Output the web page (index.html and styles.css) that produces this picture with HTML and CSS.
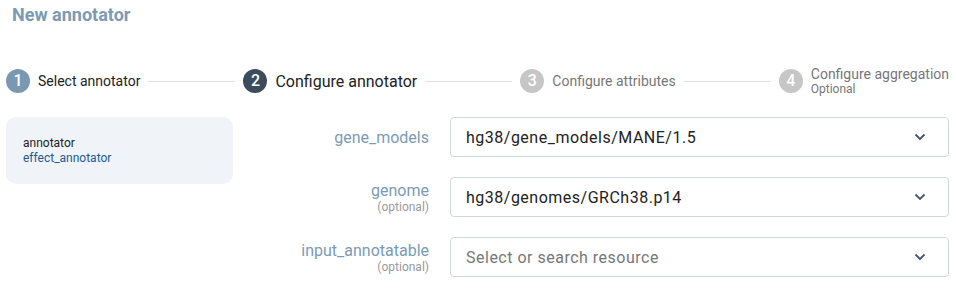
FILE: index.html
```html
<!DOCTYPE html>
<html lang="en">
<head>
<meta charset="utf-8">
<title>New annotator</title>
<link rel="stylesheet" href="styles.css">
</head>
<body>
<div class="page">
  <h1 class="title">New annotator</h1>

  <div class="stepper">
    <div class="step done">
      <span class="num">1</span>
      <span class="step-label">Select annotator</span>
    </div>
    <div class="line"></div>
    <div class="step active">
      <span class="num">2</span>
      <span class="step-label">Configure annotator</span>
    </div>
    <div class="line"></div>
    <div class="step todo">
      <span class="num">3</span>
      <span class="step-label">Configure attributes</span>
    </div>
    <div class="line"></div>
    <div class="step todo">
      <span class="num">4</span>
      <span class="step-label stacked">Configure aggregation<small>Optional</small></span>
    </div>
  </div>

  <div class="content">
    <div class="card">
      <div class="card-key">annotator</div>
      <div class="card-value">effect_annotator</div>
    </div>

    <div class="form">
      <div class="label"><span class="name">gene_models</span></div>
      <div class="select">
        <span class="value">hg38/gene_models/MANE/1.5</span>
        <svg class="chev" width="12" height="8" viewBox="0 0 12 8"><path d="M1.5 1.5 L6 6 L10.5 1.5" fill="none" stroke="#43566a" stroke-width="1.8"/></svg>
      </div>

      <div class="label"><span class="name">genome</span><span class="opt">(optional)</span></div>
      <div class="select">
        <span class="value">hg38/genomes/GRCh38.p14</span>
        <svg class="chev" width="12" height="8" viewBox="0 0 12 8"><path d="M1.5 1.5 L6 6 L10.5 1.5" fill="none" stroke="#43566a" stroke-width="1.8"/></svg>
      </div>

      <div class="label"><span class="name">input_annotatable</span><span class="opt">(optional)</span></div>
      <div class="select">
        <span class="value placeholder">Select or search resource</span>
        <svg class="chev" width="12" height="8" viewBox="0 0 12 8"><path d="M1.5 1.5 L6 6 L10.5 1.5" fill="none" stroke="#43566a" stroke-width="1.8"/></svg>
      </div>
    </div>
  </div>
</div>
</body>
</html>
```

FILE: styles.css
```css
* { box-sizing: border-box; }

html, body {
  margin: 0;
  padding: 0;
  background: #ffffff;
  font-family: Roboto, "Liberation Sans", Arial, sans-serif;
  color: #222;
}

.page {
  padding: 4px 7px 0 6px;
}

.title {
  margin: 0 0 0 6px;
  font-size: 18px;
  line-height: 22px;
  font-weight: 700;
  color: #7b9bb5;
}

.stepper {
  margin-top: 35px;
  height: 40px;
  display: flex;
  align-items: center;
}

.step {
  display: flex;
  align-items: center;
  gap: 8px;
}

.num {
  width: 24px;
  height: 24px;
  border-radius: 50%;
  display: flex;
  align-items: center;
  justify-content: center;
  color: #fff;
  font-size: 16px;
  font-weight: 500;
  line-height: 1;
}

.done .num { background: #7a98b2; }
.active .num { background: #3c4c5c; }
.todo .num { background: #c6c6c6; }

.step-label {
  font-size: 14px;
  line-height: 16px;
  color: #222;
}

.active .step-label {
  font-size: 16px;
  line-height: 19px;
}

.todo .step-label { color: #777; }

.stacked {
  display: flex;
  flex-direction: column;
}

.stacked small {
  font-size: 12px;
  line-height: 14px;
  color: #777;
}

.line {
  flex: 1;
  height: 1px;
  background: #e0e0e0;
  margin: 0 8px;
}

.content {
  margin-top: 16px;
  display: flex;
  align-items: flex-start;
}

.card {
  width: 227px;
  height: 67px;
  background: #f0f4f9;
  border-radius: 10px;
  padding: 0 17px;
  display: flex;
  flex-direction: column;
  justify-content: center;
  font-size: 12px;
  line-height: 15px;
}

.card-key { color: #222; }
.card-value { color: #1d5a91; }

.form {
  flex: 1;
  display: grid;
  grid-template-columns: 1fr 499px;
  column-gap: 21px;
  row-gap: 20px;
  align-items: center;
}

.label {
  display: flex;
  flex-direction: column;
  align-items: flex-end;
  text-align: right;
}

.name {
  font-size: 16px;
  line-height: 19px;
  color: #7b9bb5;
}

.opt {
  font-size: 12px;
  line-height: 14px;
  color: #9a9a9a;
}

.select {
  height: 40px;
  border: 1px solid #cfd6de;
  border-radius: 4px;
  display: flex;
  align-items: center;
  justify-content: space-between;
  padding: 0 22px 0 15px;
}

.value {
  font-size: 16px;
  letter-spacing: 0.5px;
  color: #222;
}

.placeholder { color: #777; }

.chev { display: block; }
```
